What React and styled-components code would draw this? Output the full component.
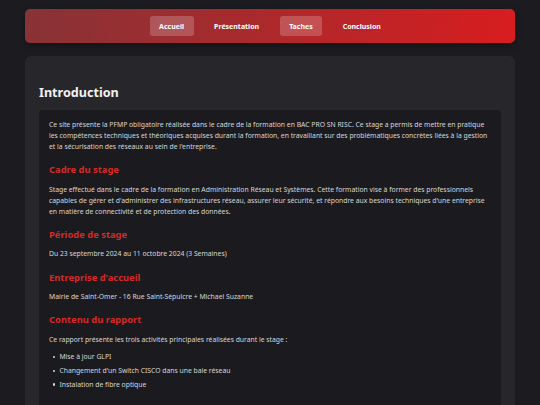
import React from "react";
import styled, { createGlobalStyle } from "styled-components";

const Global = createGlobalStyle`
  html, body { margin: 0; padding: 0; background: #1c1c20; }
  body { font-family: "Noto Sans", "Open Sans", sans-serif; color: #d6d6d8; }
  * { box-sizing: border-box; }
`;

const Page = styled.div`
  max-width: 490px;
  margin: 0 auto;
  padding-top: 9px;
  display: flex;
  flex-direction: column;
  gap: 13px;
`;

const Nav = styled.nav`
  height: 34px;
  border-radius: 5px;
  background: linear-gradient(100deg, #873337 0%, #a82a2d 45%, #d91d1f 100%);
  box-shadow: 0 2px 6px rgba(0,0,0,0.35);
  display: flex;
  align-items: center;
  justify-content: center;
  gap: 11px;
`;

const NavItem = styled.a`
  display: flex;
  align-items: center;
  height: 20px;
  padding: 0 9.5px;
  border-radius: 3px;
  font-size: 7px;
  font-weight: 700;
  color: #fff;
  text-decoration: none;
  background: ${(p) => (p.$active ? "rgba(255,255,255,0.2)" : "transparent")};
`;

const Card = styled.main`
  background: #27272b;
  border-radius: 6px;
  padding: 27px 14px 40px;
`;

const Title = styled.h2`
  margin: 0 0 7.7px;
  font-size: 12.6px;
  font-weight: 700;
  color: #f2f2f2;
  line-height: 19px;
`;

const Panel = styled.section`
  background: #1b1b1f;
  border-radius: 4px;
  padding: 9px 10px 30px;
`;

const Text = styled.p`
  margin: 0;
  font-size: 6.8px;
  line-height: 11.1px;
  color: #d8d8da;
`;

const Heading = styled.h3`
  margin: 11px 0 7px;
  font-size: 9.4px;
  font-weight: 700;
  line-height: 13.6px;
  color: #d42a2a;
`;

const List = styled.ul`
  margin: 6.5px 0 0;
  padding-left: 4px;
  list-style: none;
`;

const Item = styled.li`
  display: flex;
  align-items: center;
  gap: 4px;
  font-size: 6.8px;
  line-height: 11.2px;
  margin-bottom: 2.5px;
  color: #d8d8da;

  &::before {
    content: "";
    width: 2.4px;
    height: 2.4px;
    border-radius: 50%;
    background: #d8d8da;
    flex: none;
  }
`;

export default function App() {
  return (
    <>
      <Global />
      <Page>
        <Nav>
          <NavItem $active>Accueil</NavItem>
          <NavItem>Présentation</NavItem>
          <NavItem $active>Taches</NavItem>
          <NavItem>Conclusion</NavItem>
        </Nav>
        <Card>
          <Title>Introduction</Title>
          <Panel>
            <Text>
              Ce site présente la PFMP obligatoire réalisée dans le cadre de la formation en BAC PRO SN RISC. Ce stage a permis de mettre en pratique les compétences techniques et théoriques acquises durant la formation, en travaillant sur des problématiques concrètes liées à la gestion et la sécurisation des réseaux au sein de l'entreprise.
            </Text>
            <Heading>Cadre du stage</Heading>
            <Text>
              Stage effectué dans le cadre de la formation en Administration Réseau et Systèmes. Cette formation vise à former des professionnels capables de gérer et d'administrer des infrastructures réseau, assurer leur sécurité, et répondre aux besoins techniques d'une entreprise en matière de connectivité et de protection des données.
            </Text>
            <Heading>Période de stage</Heading>
            <Text>Du 23 septembre 2024 au 11 octobre 2024 (3 Semaines)</Text>
            <Heading>Entreprise d'accueil</Heading>
            <Text>Mairie de Saint-Omer - 16 Rue Saint-Sépulcre + Michael Suzanne</Text>
            <Heading>Contenu du rapport</Heading>
            <Text>Ce rapport présente les trois activités principales réalisées durant le stage :</Text>
            <List>
              <Item>Mise à jour GLPI</Item>
              <Item>Changement d'un Switch CISCO dans une baie réseau</Item>
              <Item>Instalation de fibre optique</Item>
            </List>
          </Panel>
        </Card>
      </Page>
    </>
  );
}
